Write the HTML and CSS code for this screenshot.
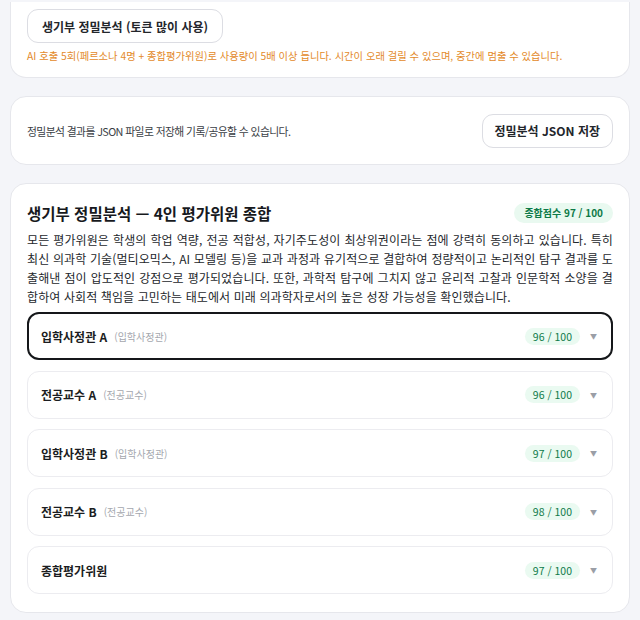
FILE: index.html
```html
<!DOCTYPE html>
<html lang="ko">
<head>
<meta charset="utf-8">
<link rel="stylesheet" href="styles.css">
</head>
<body>
<div class="page">
  <section class="card card-top">
    <button class="btn">생기부 정밀분석 (토큰 많이 사용)</button>
    <p class="warn">AI 호출 5회(페르소나 4명 + 종합평가위원)로 사용량이 5배 이상 듭니다. 시간이 오래 걸릴 수 있으며, 중간에 멈출 수 있습니다.</p>
  </section>

  <section class="card card-save">
    <p class="save-text">정밀분석 결과를 JSON 파일로 저장해 기록/공유할 수 있습니다.</p>
    <button class="btn btn-save">정밀분석 JSON 저장</button>
  </section>

  <section class="card card-result">
    <div class="result-head">
      <h2 class="result-title">생기부 정밀분석 — 4인 평가위원 종합</h2>
      <span class="total-badge">종합점수 97 / 100</span>
    </div>
    <p class="summary">모든 평가위원은 학생의 학업 역량, 전공 적합성, 자기주도성이 최상위권이라는 점에 강력히 동의하고 있습니다. 특히 최신 의과학 기술(멀티오믹스, AI 모델링 등)을 교과 과정과 유기적으로 결합하여 정량적이고 논리적인 탐구 결과를 도출해낸 점이 압도적인 강점으로 평가되었습니다. 또한, 과학적 탐구에 그치지 않고 윤리적 고찰과 인문학적 소양을 결합하여 사회적 책임을 고민하는 태도에서 미래 의과학자로서의 높은 성장 가능성을 확인했습니다.</p>
    <div class="items">
      <div class="item active">
        <span class="item-name">입학사정관 A</span><span class="item-role">(입학사정관)</span>
        <span class="score">96 / 100</span><span class="caret">▼</span>
      </div>
      <div class="item">
        <span class="item-name">전공교수 A</span><span class="item-role">(전공교수)</span>
        <span class="score">96 / 100</span><span class="caret">▼</span>
      </div>
      <div class="item">
        <span class="item-name">입학사정관 B</span><span class="item-role">(입학사정관)</span>
        <span class="score">97 / 100</span><span class="caret">▼</span>
      </div>
      <div class="item">
        <span class="item-name">전공교수 B</span><span class="item-role">(전공교수)</span>
        <span class="score">98 / 100</span><span class="caret">▼</span>
      </div>
      <div class="item">
        <span class="item-name">종합평가위원</span>
        <span class="score">97 / 100</span><span class="caret">▼</span>
      </div>
    </div>
  </section>
</div>
</body>
</html>
```

FILE: styles.css
```css
* { box-sizing: border-box; }
html, body {
  margin: 0;
  padding: 0;
  background: #f4f5f9;
  font-family: "Noto Sans CJK KR", "Noto Sans", sans-serif;
  color: #1f2329;
}
.page {
  padding: 2px 10px 0;
  display: flex;
  flex-direction: column;
  gap: 18px;
}
.card {
  background: #fff;
  border: 1px solid #e6e7ec;
  border-radius: 16px;
  padding: 0 16px;
}
.card-top {
  border-top: none;
  border-top-left-radius: 0;
  border-top-right-radius: 0;
  padding-top: 7px;
  padding-bottom: 13px;
}
.btn {
  font-family: inherit;
  background: #fff;
  border: 1px solid #dcdde3;
  border-radius: 11px;
  height: 34px;
  padding: 0 14px;
  font-size: 12px;
  font-weight: 700;
  color: #23262b;
  cursor: pointer;
}
.warn {
  margin: 5px 0 0;
  font-size: 10.3px;
  line-height: 16px;
  color: #e38a2a;
}
.card-save {
  display: flex;
  align-items: center;
  justify-content: space-between;
  height: 69px;
}
.save-text {
  margin: 0;
  font-size: 10.8px;
  letter-spacing: -0.6px;
  color: #3a3e45;
}
.btn-save { padding: 0 12px; }
.card-result {
  padding-top: 18px;
  padding-bottom: 18px;
}
.result-head {
  display: flex;
  align-items: center;
  justify-content: space-between;
}
.result-title {
  margin: 0;
  font-size: 15.5px;
  font-weight: 700;
  line-height: 22px;
  color: #17191d;
}
.total-badge {
  background: #e9f9f0;
  color: #0d7a48;
  font-size: 10px;
  font-weight: 700;
  height: 20px;
  line-height: 20px;
  padding: 0 10px;
  border-radius: 10px;
}
.summary {
  margin: 6px 0 0;
  font-size: 12px;
  letter-spacing: 0.1px;
  line-height: 19px;
  color: #24272c;
  text-align: justify;
}
.items {
  margin-top: 6px;
  display: flex;
  flex-direction: column;
  gap: 10.5px;
}
.item {
  display: flex;
  align-items: center;
  height: 48px;
  padding: 0 16px 0 13px;
  border: 1px solid #ececf0;
  border-radius: 12px;
}
.item.active {
  border: 2px solid #15171a;
  padding: 0 15px 0 12px;
}
.item-name {
  font-size: 12px;
  font-weight: 700;
  color: #1b1d21;
}
.item-role {
  margin-left: 7px;
  font-size: 10px;
  color: #a4a7ae;
}
.score {
  margin-left: auto;
  background: #eafaf1;
  color: #0f7a4a;
  font-size: 10.5px;
  height: 17px;
  line-height: 17px;
  padding: 0 8px;
  border-radius: 9px;
}
.caret {
  margin-left: 10px;
  font-size: 7px;
  color: #9a9ea6;
  width: 6px;
}
```
